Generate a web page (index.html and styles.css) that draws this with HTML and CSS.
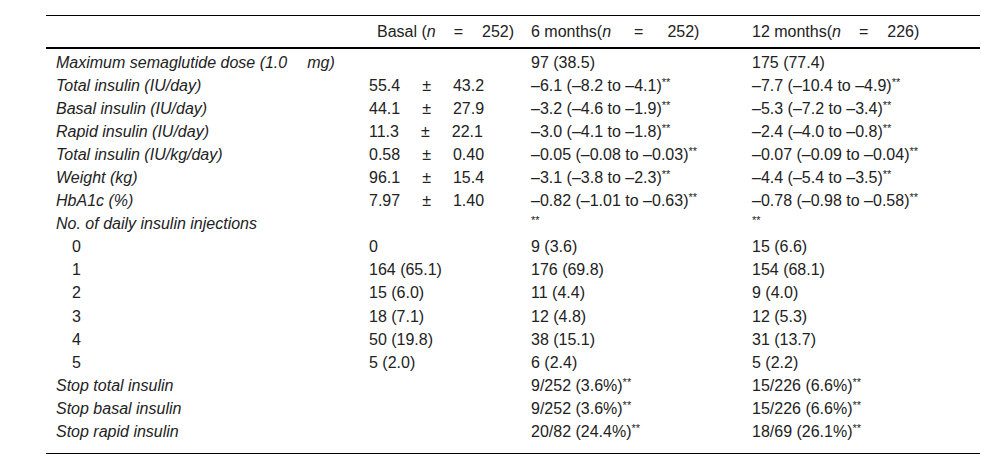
FILE: index.html
```html
<!DOCTYPE html>
<html>
<head>
<meta charset="utf-8">
<link rel="stylesheet" href="styles.css">
</head>
<body>
<div class="wrap">
<table class="data">
  <colgroup>
    <col class="c1"><col class="c2"><col class="c3"><col class="c4">
  </colgroup>
  <thead>
    <tr>
      <th></th>
      <th class="basal">Basal (<i>n</i><span class="eq">=</span>252)</th>
      <th>6 months(<i>n</i><span class="eq eq-wide">=</span>252)</th>
      <th>12 months(<i>n</i><span class="eq">=</span>226)</th>
    </tr>
  </thead>
  <tbody>
    <tr><td class="lab">Maximum semaglutide dose (1.0<span class="gap"></span>mg)</td><td></td><td>97 (38.5)</td><td>175 (77.4)</td></tr>
    <tr><td class="lab">Total insulin (IU/day)</td><td>55.4<span class="pm">±</span>43.2</td><td>–6.1 (–8.2 to –4.1)<sup>**</sup></td><td>–7.7 (–10.4 to –4.9)<sup>**</sup></td></tr>
    <tr><td class="lab">Basal insulin (IU/day)</td><td>44.1<span class="pm">±</span>27.9</td><td>–3.2 (–4.6 to –1.9)<sup>**</sup></td><td>–5.3 (–7.2 to –3.4)<sup>**</sup></td></tr>
    <tr><td class="lab">Rapid insulin (IU/day)</td><td>11.3<span class="pm">±</span>22.1</td><td>–3.0 (–4.1 to –1.8)<sup>**</sup></td><td>–2.4 (–4.0 to –0.8)<sup>**</sup></td></tr>
    <tr><td class="lab">Total insulin (IU/kg/day)</td><td>0.58<span class="pm">±</span>0.40</td><td>–0.05 (–0.08 to –0.03)<sup>**</sup></td><td>–0.07 (–0.09 to –0.04)<sup>**</sup></td></tr>
    <tr><td class="lab">Weight (kg)</td><td>96.1<span class="pm">±</span>15.4</td><td>–3.1 (–3.8 to –2.3)<sup>**</sup></td><td>–4.4 (–5.4 to –3.5)<sup>**</sup></td></tr>
    <tr><td class="lab">HbA1c (%)</td><td>7.97<span class="pm">±</span>1.40</td><td>–0.82 (–1.01 to –0.63)<sup>**</sup></td><td>–0.78 (–0.98 to –0.58)<sup>**</sup></td></tr>
    <tr><td class="lab">No. of daily insulin injections</td><td></td><td><sup>**</sup></td><td><sup>**</sup></td></tr>
    <tr><td class="ind">0</td><td>0</td><td>9 (3.6)</td><td>15 (6.6)</td></tr>
    <tr><td class="ind">1</td><td>164 (65.1)</td><td>176 (69.8)</td><td>154 (68.1)</td></tr>
    <tr><td class="ind">2</td><td>15 (6.0)</td><td>11 (4.4)</td><td>9 (4.0)</td></tr>
    <tr><td class="ind">3</td><td>18 (7.1)</td><td>12 (4.8)</td><td>12 (5.3)</td></tr>
    <tr><td class="ind">4</td><td>50 (19.8)</td><td>38 (15.1)</td><td>31 (13.7)</td></tr>
    <tr><td class="ind">5</td><td>5 (2.0)</td><td>6 (2.4)</td><td>5 (2.2)</td></tr>
    <tr><td class="lab">Stop total insulin</td><td></td><td>9/252 (3.6%)<sup>**</sup></td><td>15/226 (6.6%)<sup>**</sup></td></tr>
    <tr><td class="lab">Stop basal insulin</td><td></td><td>9/252 (3.6%)<sup>**</sup></td><td>15/226 (6.6%)<sup>**</sup></td></tr>
    <tr class="last"><td class="lab">Stop rapid insulin</td><td></td><td>20/82 (24.4%)<sup>**</sup></td><td>18/69 (26.1%)<sup>**</sup></td></tr>
  </tbody>
</table>
</div>
</body>
</html>
```

FILE: styles.css
```css
html, body {
  margin: 0;
  padding: 0;
  background: #fff;
}
body {
  font-family: "Liberation Sans", Arial, sans-serif;
  font-size: 16px;
  color: #222;
}
.wrap {
  padding: 15px 0 0 46px;
}
.data {
  width: 934px;
  border-collapse: collapse;
  table-layout: fixed;
  border-bottom: 1px solid #000;
}
.c1 { width: 313px; }
.c2 { width: 162px; }
.c3 { width: 221px; }
.c4 { width: 238px; }
.data thead tr {
  border-top: 1px solid #000;
  border-bottom: 2px solid #000;
}
.data th {
  font-weight: normal;
  text-align: left;
  height: 31px;
  padding: 0 0 0 10px;
  white-space: nowrap;
}
.data th.basal {
  padding-left: 18px;
}
.data td {
  height: 23.1px;
  padding: 0 0 0 10px;
  white-space: nowrap;
  vertical-align: middle;
}
.data tbody tr:first-child td {
  padding-top: 2px;
}
.data tr.last td {
  padding-bottom: 9px;
}
.lab {
  font-style: italic;
}
.data td.ind {
  padding-left: 26px;
}
.eq {
  display: inline-block;
  margin: 0 19px 0 18px;
}
.eq-wide {
  margin: 0 24px 0 23px;
}
.pm {
  display: inline-block;
  margin: 0 22px 0 22px;
}
.gap {
  display: inline-block;
  width: 20px;
}
sup {
  font-size: 11px;
  vertical-align: 5px;
  line-height: 0;
}
```
